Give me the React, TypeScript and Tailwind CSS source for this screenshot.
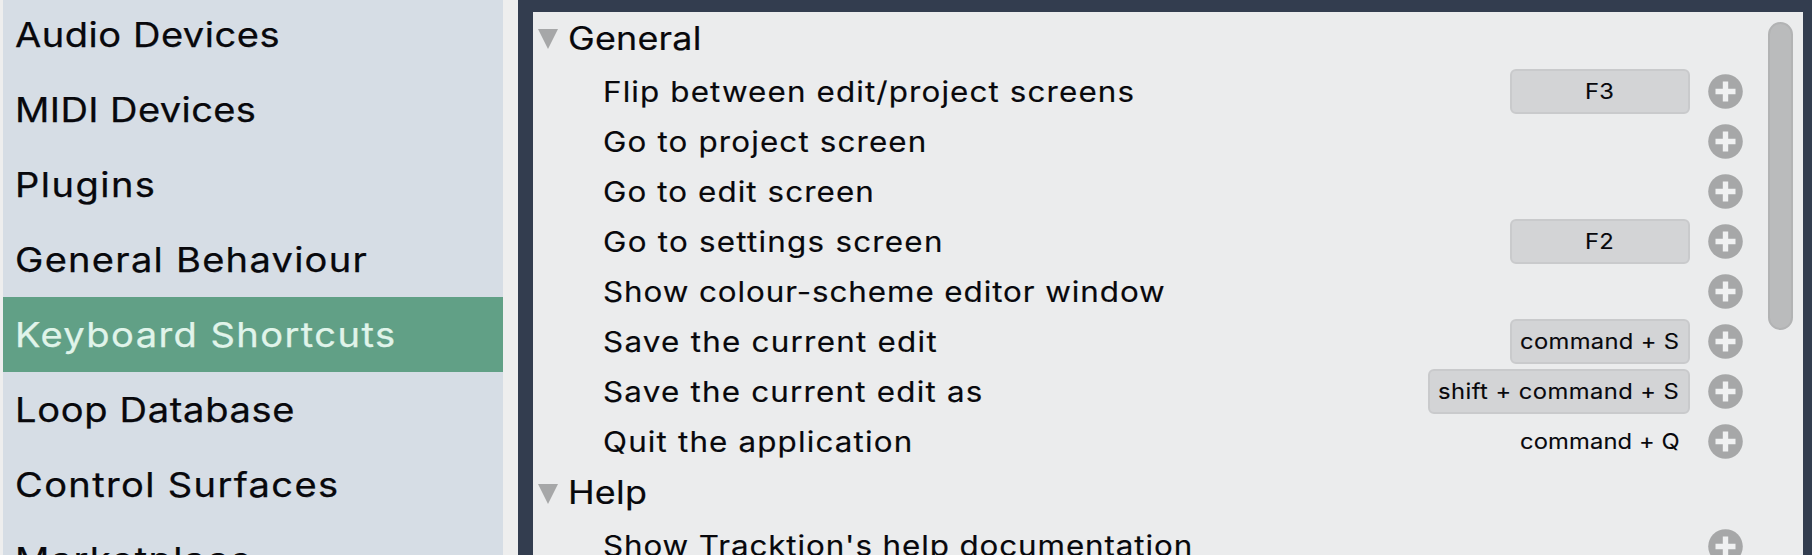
type Page = { name: string; tracking: string };
type Command = { name: string; tracking: string; shortcut?: Shortcut };
type Shortcut = { keys: string; tracking: string; locked?: boolean };

const pages: Page[] = [
  { name: "Audio Devices", tracking: "tracking-[0.45px]" },
  { name: "MIDI Devices", tracking: "tracking-[0.35px]" },
  { name: "Plugins", tracking: "tracking-[1.3px]" },
  { name: "General Behaviour", tracking: "tracking-[1.12px]" },
  { name: "Keyboard Shortcuts", tracking: "tracking-[1.26px]" },
  { name: "Loop Database", tracking: "tracking-[0.6px]" },
  { name: "Control Surfaces", tracking: "tracking-[1.2px]" },
  { name: "Marketplace", tracking: "tracking-[1.2px]" },
];

const sections: { title: string; commands: Command[] }[] = [
  {
    title: "General",
    commands: [
      {
        name: "Flip between edit/project screens",
        tracking: "tracking-[1px]",
        shortcut: { keys: "F3", tracking: "tracking-[0.4px]" },
      },
      { name: "Go to project screen", tracking: "tracking-[1.02px]" },
      { name: "Go to edit screen", tracking: "tracking-[0.96px]" },
      {
        name: "Go to settings screen",
        tracking: "tracking-[1.1px]",
        shortcut: { keys: "F2", tracking: "tracking-[0.4px]" },
      },
      { name: "Show colour-scheme editor window", tracking: "tracking-[0.82px]" },
      {
        name: "Save the current edit",
        tracking: "tracking-[1.12px]",
        shortcut: { keys: "command + S", tracking: "tracking-[0.3px]" },
      },
      {
        name: "Save the current edit as",
        tracking: "tracking-[1.08px]",
        shortcut: { keys: "shift + command + S", tracking: "tracking-[0.4px]" },
      },
      {
        name: "Quit the application",
        tracking: "tracking-[1.03px]",
        shortcut: { keys: "command + Q", tracking: "tracking-[0.1px]", locked: true },
      },
    ],
  },
  {
    title: "Help",
    commands: [{ name: "Show Tracktion's help documentation", tracking: "tracking-[0.8px]" }],
  },
];

function AddButton() {
  return (
    <button className="ml-[17.5px] size-[35px] shrink-0" aria-label="Add shortcut">
      <svg viewBox="0 0 35 35" className="block size-full">
        <circle cx="17.5" cy="17.5" r="17.3" fill="#a6a7a8" />
        <path d="M17.5 7.5v20M7.5 17.5h20" stroke="#f0f1f2" strokeWidth="5.4" fill="none" />
      </svg>
    </button>
  );
}

function Keys({ shortcut }: { shortcut: Shortcut }) {
  const look = shortcut.locked
    ? "border-transparent"
    : "border-[#c9cacc] bg-[#d3d4d6]";
  const width = shortcut.keys.startsWith("shift") ? "w-[262px]" : "w-[180px]";
  return (
    <span
      className={`mr-px flex h-[45px] items-center justify-center rounded-md border-2 pl-px text-[22px] whitespace-pre ${look} ${width} ${shortcut.tracking}`}
    >
      <span className="scale-x-[1.08] [-webkit-text-stroke:0.1px_currentColor]">{shortcut.keys}</span>
    </span>
  );
}

export default function App() {
  return (
    <div className="h-[557px] w-[1812px] overflow-hidden bg-white font-['Inter',sans-serif] text-[#08080c]">
      <div className="flex h-[555px] overflow-hidden bg-[#eeeeee] pl-[2.5px]">
        <nav className="h-full w-[500px] shrink-0 overflow-hidden bg-[#d6dde5]">
          <ul className="-mt-[3px]">
            {pages.map((page) => (
              <li
                key={page.name}
                className={`flex h-[75px] items-center pb-px pl-[12.5px] text-[34px] whitespace-nowrap ${page.tracking} ${
                  page.name === "Keyboard Shortcuts" ? "bg-[#61a086] text-[#e0f4ea]" : ""
                }`}
              >
                <span className="origin-left scale-x-[1.12] [-webkit-text-stroke:0.25px_currentColor]">
                  {page.name}
                </span>
              </li>
            ))}
          </ul>
        </nav>

        <main className="ml-[15px] flex h-full flex-1 overflow-hidden bg-[#333d4f] pt-[12px] pr-[9px] pl-[15px]">
          <div className="h-full flex-1 bg-[#ebeced]">
            {sections.map((section) => (
              <section key={section.title}>
                <h2 className="flex h-[54.5px] items-center pl-[5px] text-[32px] tracking-[0.2px]">
                  <svg viewBox="0 0 20 20" className="mr-2.5 size-5 shrink-0">
                    <path d="M0 0h20L10 20z" fill="#a6a7a8" />
                  </svg>
                  <span className="-mt-px origin-left scale-x-[1.12] [-webkit-text-stroke:0.2px_currentColor]">
                    {section.title}
                  </span>
                </h2>
                {section.commands.map((command) => (
                  <div key={command.name} className="flex h-[50px] items-center pl-[70px]">
                    <span className={`flex-1 text-[28px] whitespace-nowrap ${command.tracking}`}>
                      <span className="inline-block origin-left scale-x-[1.12] [-webkit-text-stroke:0.15px_currentColor]">
                        {command.name}
                      </span>
                    </span>
                    {command.shortcut && <Keys shortcut={command.shortcut} />}
                    <AddButton />
                  </div>
                ))}
              </section>
            ))}
          </div>
          <div className="h-full w-[60px] shrink-0 bg-[#ebeced] pt-2.5 pl-[25px]">
            <div className="h-[308px] w-[25px] rounded-full border-2 border-[#b2b3b4] bg-[#babbbc]" />
          </div>
        </main>
      </div>
    </div>
  );
}
